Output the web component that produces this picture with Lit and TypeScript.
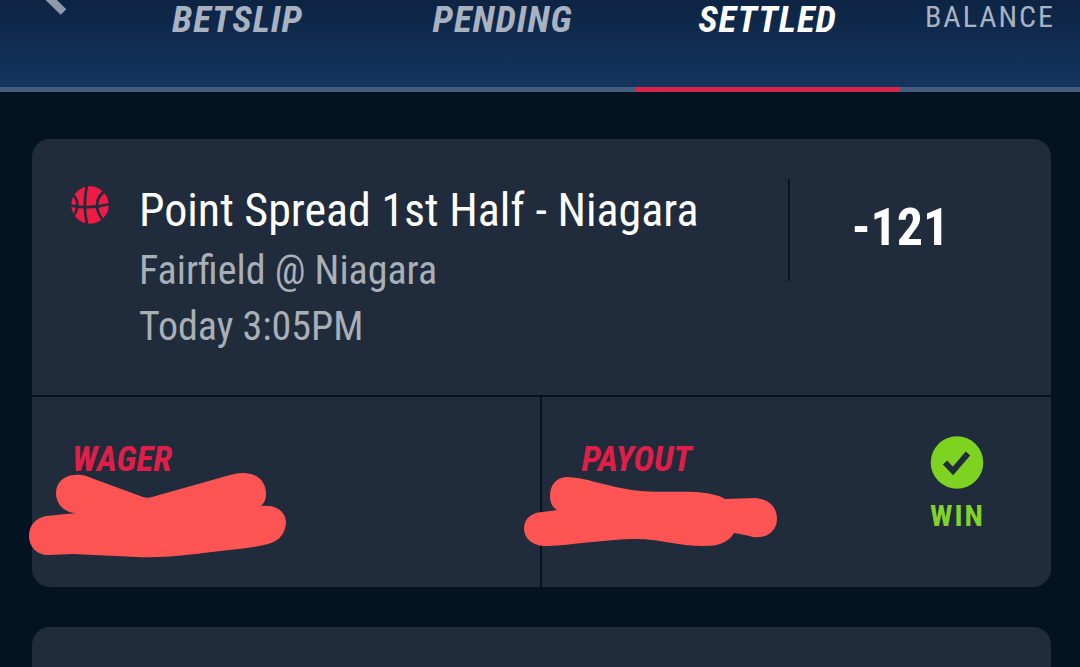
import { LitElement, html, css, svg } from "lit";
import { customElement, property, state } from "lit/decorators.js";

const basketball = svg`
  <circle cx="19" cy="19" r="18.7" fill="#ef1b44"></circle>
  <g fill="none" stroke="#202c3c" stroke-width="2.7">
    <path d="M15.8 0C13.2 12 13 25 16 38"></path>
    <path d="M0 19.5C12 22 26 21.5 38 18.2"></path>
    <path d="M2.5 9C7.6 15 7.6 23 2.6 29.5"></path>
    <path d="M33.5 5.5C24.2 11.5 23.6 24.5 32 34"></path>
  </g>`;

@customElement("bet-header")
export class BetHeader extends LitElement {
  @state() private active = "SETTLED";

  static styles = css`
    :host { display: block; }
    .bar {
      display: grid;
      grid-template-columns: 105fr 265fr 265fr 265fr 180fr;
      height: 92px;
      background: linear-gradient(#0d2443, #14345f 87px);
    }
    button {
      font: inherit;
      color: #a9b2c1;
      background: none;
      border: 0;
      border-bottom: 5px solid #465d7b;
      margin: 0;
      padding: 0;
      cursor: pointer;
      display: flex;
      justify-content: center;
      align-items: flex-start;
    }
    .back { justify-content: flex-start; padding-left: 40px; }
    .tab {
      font-size: 37px;
      line-height: 40px;
      font-weight: 700;
      font-style: italic;
      letter-spacing: 1px;
    }
    .tab.active { color: #fff; border-bottom-color: #dc234a; }
    .balance { font-size: 30px; line-height: 34px; letter-spacing: 2px; }
    .back svg { display: block; }
  `;

  render() {
    return html`
      <nav class="bar">
        <button class="back" aria-label="Back">
          <svg width="30" height="16" viewBox="0 0 30 16" aria-hidden="true">
            <path d="M4 -7 L23.5 12" fill="none" stroke="#8f9aa8" stroke-width="8"></path>
          </svg>
        </button>
        ${["BETSLIP", "PENDING", "SETTLED"].map(
          (t) => html`<button
            class="tab ${t === this.active ? "active" : ""}"
            @click=${() => (this.active = t)}
          >${t}</button>`
        )}
        <button class="balance">BALANCE</button>
      </nav>
    `;
  }
}

@customElement("bet-card")
export class BetCard extends LitElement {
  @property() selection = "";
  @property() matchup = "";
  @property() time = "";
  @property() odds = "";

  static styles = css`
    :host { display: block; }
    .card { background: #202c3b; border-radius: 18px; }
    .top {
      display: grid;
      grid-template-columns: 107px 1fr 263px;
      min-height: 258px;
      box-sizing: border-box;
      padding: 40px 0;
      border-bottom: 2px solid #041322;
    }
    .sport { padding: 7px 0 0 39px; }
    .sport svg { display: block; }
    h2, p { margin: 0; font-weight: 400; white-space: nowrap; }
    h2 { color: #fff; font-size: 46px; line-height: 62px; padding-bottom: 2px; }
    p { color: #a9afb7; font-size: 40px; line-height: 56px; }
    .odds {
      height: 102px;
      box-sizing: border-box;
      border-left: 2px solid #0c141d;
      padding-right: 40px;
      color: #fff;
      font-size: 52px;
      font-weight: 700;
      line-height: 98px;
      text-align: center;
    }
    .bottom { display: grid; grid-template-columns: 1fr 1fr; }
    .cell {
      position: relative;
      min-height: 190px;
      box-sizing: border-box;
      padding: 39px 66px 39px 40px;
      display: flex;
      justify-content: space-between;
    }
    .cell:first-child { border-right: 2px solid #041322; }
    .label { color: #e01f48; font-size: 35px; line-height: 48px; font-weight: 700; font-style: italic; }
    .scribble { position: absolute; fill: #ff5454; }
    .wager { left: -3px; top: 75px; }
    .payout { left: -18px; top: 80px; }
    .result {
      color: #82d22b;
      font-size: 30px;
      line-height: 54px;
      font-weight: 700;
      letter-spacing: 2px;
    }
    .result svg { display: block; }
  `;

  render() {
    return html`
      <article class="card">
        <div class="top">
          <div class="sport">
            <svg width="38" height="38" viewBox="0 0 38 38" aria-hidden="true">${basketball}</svg>
          </div>
          <div>
            <h2>${this.selection}</h2>
            <p>${this.matchup}</p>
            <p>${this.time}</p>
          </div>
          <div class="odds">${this.odds}</div>
        </div>
        <div class="bottom">
          <div class="cell">
            <div class="label">WAGER</div>
            <svg class="scribble wager" width="257" height="86" viewBox="29 472 257 86" aria-hidden="true">
              <path d="M75 475C83 474 88 477 94 479L143 497C146 498 149 498 152 497L230 475C249 469 266 476 266 494C266 500 264 503 261 506C275 504 286 511 286 523C285 534 279 541 268 544C253 548 230 550 212 552C185 555 169 558 137 557L73 554L48 555C37 555 29 547 29 536C29 525 36 518 46 516L77 513C64 513 56 504 56 493C56 483 64 475 75 475Z"></path>
            </svg>
          </div>
          <div class="cell">
            <div class="label">PAYOUT</div>
            <svg class="scribble payout" width="254" height="70" viewBox="524 477 254 70" aria-hidden="true">
              <path d="M566 477C584 477 609 487 632 490C655 493 675 491 696 492C709 493 718 495 725 499L755 498C769 499 777 507 777 519C777 532 765 539 753 537C747 535 740 534 734 533C728 543 718 546 704 546C676 546 657 538 632 539C600 540 572 545 548 546C535 547 524 540 524 528C524 518 533 512 543 512L557 510C552 507 550 502 550 496C550 485 556 478 566 477Z"></path>
            </svg>
            <div class="result">
              <svg width="54" height="53" viewBox="0 0 54 53" aria-hidden="true">
                <circle cx="27" cy="26.5" r="26.3" fill="#7ed321"></circle>
                <path d="M15 26.5L23 35L38 17.5" fill="none" stroke="#202c3b" stroke-width="5.8"></path>
              </svg>
              WIN
            </div>
          </div>
        </div>
      </article>
    `;
  }
}

@customElement("app-root")
export class AppRoot extends LitElement {
  static styles = css`
    :host {
      display: block;
      height: 100vh;
      overflow: hidden;
      background: #041322;
      font-family: "Roboto Condensed", Roboto, sans-serif;
    }
    .list {
      display: flex;
      flex-direction: column;
      gap: 40px;
      padding: 47px 29px 40px 32px;
    }
    .upcoming { height: 256px; background: #202c3b; border-radius: 18px; }
  `;

  render() {
    return html`
      <bet-header></bet-header>
      <main class="list">
        <bet-card
          selection="Point Spread 1st Half - Niagara"
          matchup="Fairfield @ Niagara"
          time="Today 3:05PM"
          odds="-121"
        ></bet-card>
        <div class="upcoming"></div>
      </main>
    `;
  }
}
